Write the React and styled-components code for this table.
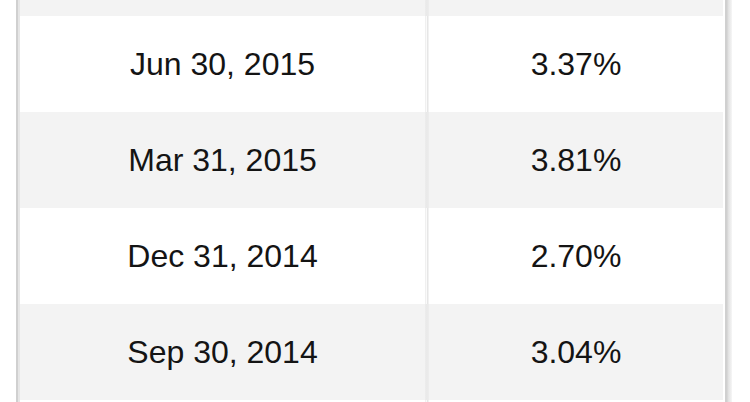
import React from "react";
import styled, { createGlobalStyle } from "styled-components";

const GlobalStyle = createGlobalStyle`
  html, body {
    margin: 0;
    padding: 0;
    background: #ffffff;
    overflow: hidden;
  }
  body {
    font-family: "Liberation Sans", Arial, Helvetica, sans-serif;
  }
`;

const Page = styled.div`
  width: 750px;
  height: 402px;
  overflow: hidden;
  background: #fff;
`;

// the frame draws the two grey rails on the sides of the table
const Frame = styled.div`
  margin-left: 16px;
  width: 716px;
  margin-top: -80px;
  box-sizing: border-box;
  padding: 0 9px 0 4px;
  background:
    linear-gradient(to right, #d0d0d0 0 2px, #e6e6e6 2px 4px) left top / 4px 100% no-repeat,
    linear-gradient(to right, #ffffff 0 2px, #d0d0d0 2px 4px, #e0e0e0 5px, #f6f6f6 9px) right top / 9px 100% no-repeat;
`;

const Table = styled.div`
  display: flex;
  flex-direction: column;
`;

const Row = styled.div`
  display: grid;
  grid-template-columns: 405px 4px 1fr;
  height: 96px;
  background: ${(p) => (p.$shaded ? "#f3f3f3" : "#ffffff")};
`;

const Cell = styled.div`
  display: flex;
  align-items: center;
  justify-content: center;
  font-size: 32px;
  color: #141414;
`;

const Divider = styled.div`
  background: ${(p) =>
    p.$shaded
      ? "linear-gradient(to right, #ececec, #e9e9e9 50%, #ededed)"
      : "linear-gradient(to right, #f0f0f0 0 1px, #fafafa 1px 2px, #e6e6e6 2px 3px, #f2f2f2 3px)"};
`;

// first and last rows are only peeking in at the edges, their text is out of view
const rows = [
  { date: "", value: "" },
  { date: "Jun 30, 2015", value: "3.37%" },
  { date: "Mar 31, 2015", value: "3.81%" },
  { date: "Dec 31, 2014", value: "2.70%" },
  { date: "Sep 30, 2014", value: "3.04%" },
  { date: "", value: "" },
];

export default function App() {
  return (
    <Page>
      <GlobalStyle />
      <Frame>
        <Table>
          {rows.map((r, i) => (
            <Row key={i} $shaded={i % 2 === 0}>
              <Cell>{r.date}</Cell>
              <Divider $shaded={i % 2 === 0} />
              <Cell>{r.value}</Cell>
            </Row>
          ))}
        </Table>
      </Frame>
    </Page>
  );
}
